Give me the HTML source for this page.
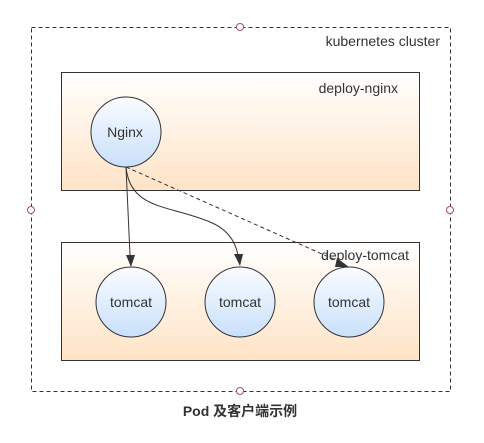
<!DOCTYPE html>
<html><head><meta charset="utf-8"><style>
body{margin:0;background:#fff;width:484px;height:438px;overflow:hidden}
</style></head><body>
<svg width="484" height="438" xmlns="http://www.w3.org/2000/svg" font-family="'Liberation Sans','Noto Sans CJK SC',sans-serif">
<defs>
<linearGradient id="o" x1="0" y1="0" x2="0" y2="1"><stop offset="0" stop-color="#fff"/><stop offset="1" stop-color="#ffe3c6"/></linearGradient>
<linearGradient id="b" x1="0" y1="0" x2="0" y2="1"><stop offset="0" stop-color="#fafcff"/><stop offset="1" stop-color="#c9e0fb"/></linearGradient>
</defs>
<rect x="31.5" y="27.5" width="419" height="364" fill="none" stroke="#333" stroke-dasharray="4,3"/>
<g fill="#fff" stroke="#a05060"><circle cx="240" cy="27" r="3.5"/><circle cx="31" cy="210" r="3.5"/><circle cx="450" cy="210" r="3.5"/><circle cx="240" cy="391" r="3.5"/></g>
<text x="440" y="46" font-size="14" fill="#333" text-anchor="end">kubernetes cluster</text>
<rect x="61.5" y="72.5" width="358" height="118" fill="url(#o)" stroke="#333"/>
<text x="398" y="93" font-size="14" fill="#333" text-anchor="end">deploy-nginx</text>
<rect x="61.5" y="242.5" width="358" height="118" fill="url(#o)" stroke="#333"/>
<g stroke="#333" fill="url(#b)"><circle cx="126" cy="132" r="35"/><circle cx="131" cy="302" r="35"/><circle cx="240" cy="302" r="35"/><circle cx="349" cy="302" r="35"/></g>
<g font-size="14" fill="#333" text-anchor="middle"><text x="125" y="137">Nginx</text><text x="131" y="307">tomcat</text><text x="240" y="307">tomcat</text><text x="349" y="307">tomcat</text></g>
<text x="409" y="260" font-size="14" fill="#333" text-anchor="end">deploy-tomcat</text>
<g fill="none" stroke="#333">
<path d="M126 167 L130 255"/>
<path d="M126 167 C130 210 170 205 210 222 C230 230 236 245 238 255"/>
<path d="M126 167 L340 262" stroke-dasharray="4,3"/>
</g>
<g fill="#333"><path d="M126 255 L135 255 L131 267Z"/><path d="M234 254 L243 254 L240 266Z"/><path d="M337 258 L349 267 L335 267Z"/></g>
<text x="240" y="416" font-size="14" font-weight="bold" fill="#333" text-anchor="middle">Pod 及客户端示例</text>
</svg>
</body></html>
